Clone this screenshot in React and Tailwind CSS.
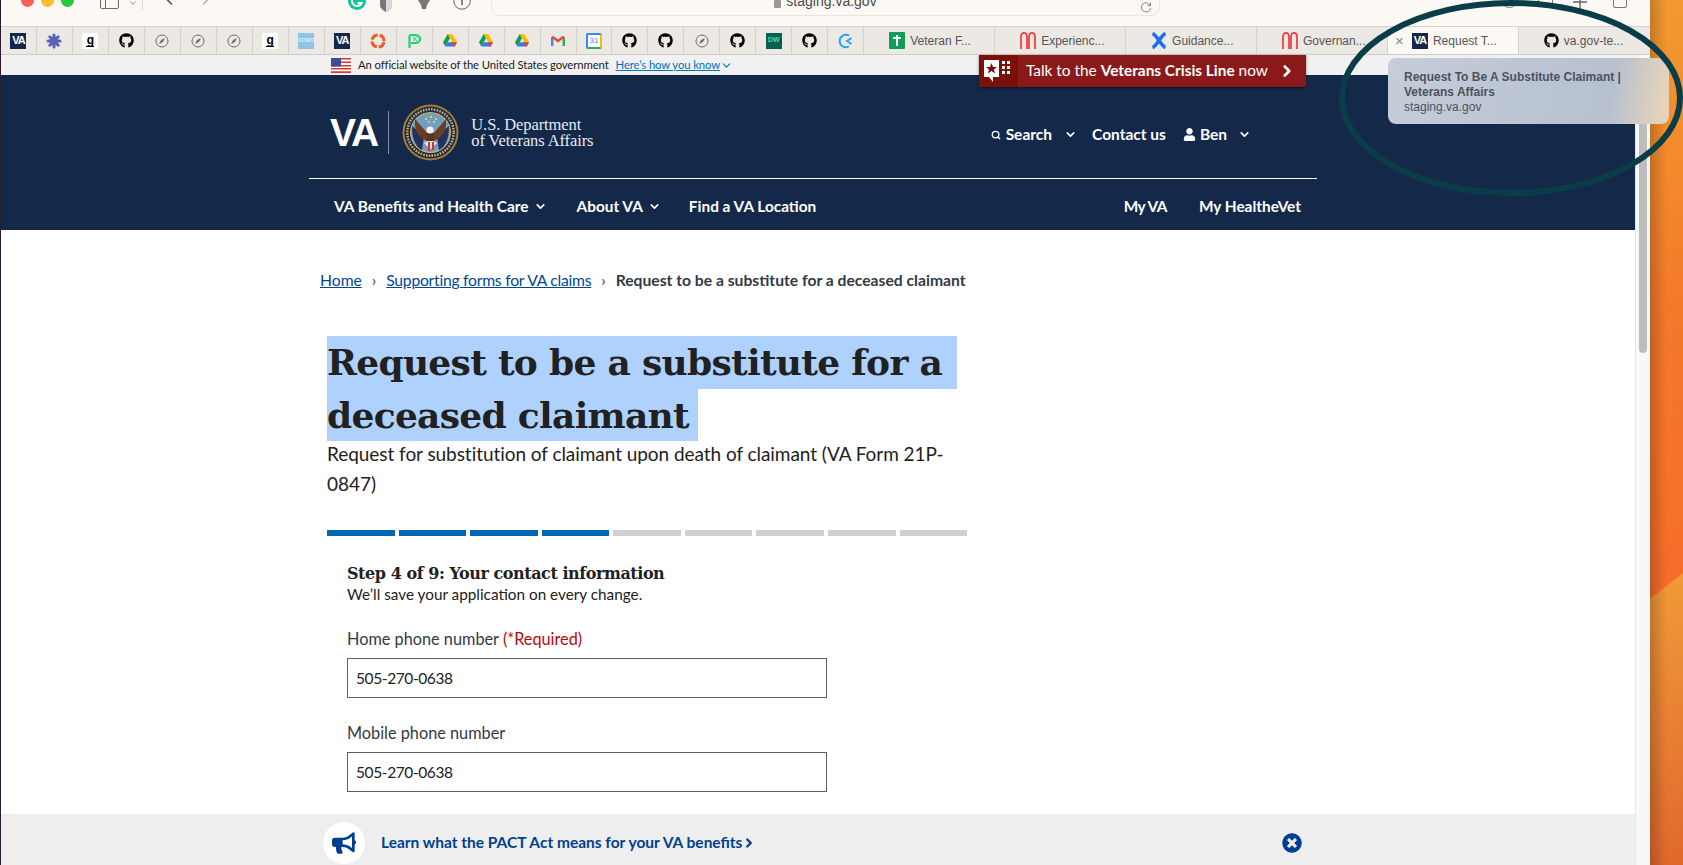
import React from "react";
import { ChevronDown, ChevronRight, Search } from "lucide-react";
import { FaBullhorn, FaGithub, FaTimesCircle, FaUser } from "react-icons/fa";

const sans = "font-['Lato','Noto_Sans',sans-serif]";
const slab = "font-['DejaVu_Serif',serif]";

const Compass = () => (
  <svg width="14" height="14" viewBox="0 0 14 14" fill="none">
    <circle cx="7" cy="7" r="6" stroke="#6e6e6e" strokeWidth="1" />
    <path d="M10 4L8 8L4 10L6 6Z" fill="#6e6e6e" />
  </svg>
);

const Github = () => <FaGithub className="text-[15px] text-black" />;

const Va = () => (
  <div className="flex h-4 w-4 items-center justify-center bg-[#14294a] font-['Liberation_Sans',sans-serif] text-[11px] font-bold tracking-[-1px] text-white">
    VA
  </div>
);

const Star = () => (
  <svg width="16" height="16" viewBox="0 0 16 16" stroke="#5a5fb8" strokeWidth="3" strokeLinecap="round">
    <path d="M8 2V14M2 8H14M3.8 3.8L12.2 12.2M12.2 3.8L3.8 12.2" />
  </svg>
);

const Goodreads = () => (
  <div className="flex h-4 w-4 flex-col items-center justify-center bg-white font-['Liberation_Sans',sans-serif] text-[12px] leading-[10px] font-bold text-black">
    g
    <div className="mt-[1px] h-[1px] w-2 bg-black" />
  </div>
);

const Domo = () => (
  <div className="flex h-4 w-4 items-center justify-center bg-[#90c3e6] font-['Liberation_Sans',sans-serif] text-[5px] text-white">
    DOMO
  </div>
);

const Ring = () => (
  <svg width="16" height="16" viewBox="0 0 16 16" fill="none" stroke="#ee5a2c" strokeWidth="3">
    <circle cx="8" cy="8" r="6" strokeDasharray="7.5 1.9" strokeDashoffset="-1" />
  </svg>
);

const Pk = () => (
  <svg width="14" height="16" viewBox="0 0 14 16" fill="none" stroke="#1fd07a" strokeWidth="2.2">
    <path d="M2.5 15V2" />
    <path d="M2.5 2H8.5C14.5 2 14.5 10 8.5 10H4" />
    <path d="M7 3.5V8M10 3.5L7.5 6L10 8" strokeWidth="1" />
  </svg>
);

const Drive = () => (
  <svg width="14" height="13" viewBox="0 0 14 13">
    <path d="M4.7 0H9.3L14 8.2H9.3Z" fill="#fbbc04" />
    <path d="M4.7 0L0 8.2L2.3 12.5L7 4.2Z" fill="#0f9d58" />
    <path d="M2.3 12.5H11.7L14 8.2H4.7Z" fill="#3b78e7" />
    <path d="M9.3 8.2H14L11.7 12.5L10 12.5Z" fill="#ea4335" />
  </svg>
);

const Gmail = () => (
  <svg width="14" height="11" viewBox="0 0 14 11" fill="none" strokeWidth="2.4">
    <path d="M1.2 11V2" stroke="#4285f4" />
    <path d="M12.8 11V2" stroke="#34a853" />
    <path d="M1.2 1.6L7 6L12.8 1.6" stroke="#ea4335" />
  </svg>
);

const Calendar = () => (
  <div className="flex h-4 w-4 items-center justify-center rounded-[2px] border-2 border-t-[#4285f4] border-r-[#fbbc04] border-b-[#34a853] border-l-[#4285f4] bg-white font-['Liberation_Sans',sans-serif] text-[8px] text-[#4285f4]">
    31
  </div>
);

const Dw = () => (
  <div className="flex h-4 w-4 items-center justify-center bg-[#07614f] font-['Liberation_Sans',sans-serif] text-[7px] font-bold text-[#45d8b0]">
    DW
  </div>
);

const Clock = () => (
  <svg width="15" height="16" viewBox="0 0 15 16" fill="none" stroke="#2ba5ec" strokeWidth="2">
    <path d="M11 2.5A6.3 6.3 0 1 0 11 13.5" />
    <path d="M13.5 5L9 8L13.5 11" />
  </svg>
);

const Arches = () => (
  <svg width="16" height="17" viewBox="0 0 16 17" fill="none" stroke="#f0383c" strokeWidth="1.7">
    <path d="M1 17V5C1 -0.5 7 -0.5 7 5V17" />
    <path d="M9 17V5C9 -0.5 15 -0.5 15 5V17" />
  </svg>
);

const Confluence = () => (
  <svg width="16" height="17" viewBox="0 0 16 17" fill="none" stroke="#1f6ff0" strokeWidth="3.6">
    <path d="M1.5 1.5C6 3 10 14 14.5 15.5" />
    <path d="M14.5 1.5C10 3 6 14 1.5 15.5" />
  </svg>
);

const Cross = () => (
  <div className="relative flex h-[17px] w-[16px] items-center justify-center rounded-[1px] bg-[#0f9d58]">
    <div className="h-[11px] w-[2px] bg-white" />
    <div className="absolute top-[5px] h-[2px] w-[8px] bg-white" />
  </div>
);

const iconTabs = [
  Va, Star, Goodreads, Github, Compass, Compass, Compass, Goodreads, Domo, Va, Ring, Pk,
  Drive, Drive, Drive, Gmail, Calendar, Github, Github, Compass, Github, Dw, Github, Clock,
];

const bigTabs = [
  { icon: Cross, label: "Veteran F..." },
  { icon: Arches, label: "Experienc..." },
  { icon: Confluence, label: "Guidance..." },
  { icon: Arches, label: "Governan..." },
];

const Seal = () => (
  <svg width="57" height="57" viewBox="0 0 57 57">
    <circle cx="28.5" cy="28.5" r="28" fill="#a67c2d" />
    <circle cx="28.5" cy="28.5" r="26" fill="#1b2a4a" />
    <circle cx="28.5" cy="28.5" r="23.2" fill="none" stroke="#c9b27a" strokeWidth="2.4" strokeDasharray="1.6 1.2" />
    <circle cx="28.5" cy="28.5" r="20.5" fill="#e3b64a" />
    <circle cx="28.5" cy="28.5" r="19.5" fill="#6f9fc4" />
    <path d="M10 22L22 32L20 46C14 43 10 36 10 22Z" fill="#22325f" />
    <path d="M47 22L35 32L37 46C43 43 47 36 47 22Z" fill="#22325f" />
    <path d="M26 30L13 15C12 24 15 33 25 37Z" fill="#6b3d1e" />
    <path d="M31 30L44 15C45 24 42 33 32 37Z" fill="#6b3d1e" />
    <path d="M25 29H32V38H25Z" fill="#5a3418" />
    <circle cx="28" cy="26" r="3.6" fill="#f4f1e8" />
    <path d="M20 37L28 47L37 37L33 41H24Z" fill="#c8343a" />
    <path d="M22 39L28 46L35 39L31 37H26Z" fill="#f1e9e0" />
    <path d="M26 38H28V47H26ZM30 38H32V46H30Z" fill="#c8343a" />
    <path d="M23 14H25V16H23ZM28 12H30V14H28ZM33 14H35V16H33ZM26 17H28V19H26ZM31 17H33V19H31Z" fill="#e8c860" />
  </svg>
);

const CrisisIcon = () => (
  <svg width="29" height="24" viewBox="0 0 29 24" fill="white">
    <path d="M0 1H15V18H9V23L5 18H0Z" />
    <path d="M7.5 4L9 8H13L10 10.5L11 14.5L7.5 12L4 14.5L5 10.5L2 8H6Z" fill="#7a1008" />
    <path d="M18 2H21V5H18ZM23 2H26V5H23ZM18 7H21V10H18ZM23 7H26V10H23ZM18 12H21V15H18ZM23 12H26V15H23Z" />
  </svg>
);

const Flag = () => (
  <svg width="20" height="15" viewBox="0 0 20 15">
    <rect width="20" height="15" fill="#fff" />
    <path d="M0 0H20V1.5H0ZM0 3.5H20V5H0ZM0 7H20V8.5H0ZM0 10H20V11.5H0ZM0 13.2H20V15H0Z" fill="#d33a36" />
    <rect width="10" height="8.5" fill="#3c4d92" />
  </svg>
);

const Chevron = ({ className }) => <ChevronDown strokeWidth={3} className={className} />;

const PhoneField = ({ label, required }) => (
  <div className="flex flex-col">
    <label className="text-[16.3px] leading-[24px] text-[#323a45]">
      {label} {required && <span className="text-[#b50909]">(*Required)</span>}
    </label>
    <input
      readOnly
      value="505-270-0638"
      className="mt-[7px] h-[40px] w-[480px] border border-[#5b616b] px-2 text-[15.5px] tracking-[-0.4px] text-[#212121] outline-none"
    />
  </div>
);

export default function App() {
  const steps = [1, 2, 3, 4, 5, 6, 7, 8, 9];
  return (
    <div className={`relative flex h-[865px] w-full overflow-hidden bg-white ${sans}`}>
      <div className="flex w-[1650px] flex-col border-l border-[#2c1a30]">
        {/* browser toolbar, cut off at the top of the shot */}
        <div className="flex h-[27px] items-start overflow-hidden border-b border-[#d6d2cd] bg-[#fcf8f4] font-['Liberation_Sans',sans-serif]">
          <div className="ml-[20px] -mt-[6px] flex gap-[7px]">
            <div className="h-[13px] w-[13px] rounded-full bg-[#ff5f57]" />
            <div className="h-[13px] w-[13px] rounded-full bg-[#febc2e]" />
            <div className="h-[13px] w-[13px] rounded-full bg-[#28c840]" />
          </div>
          <div className="ml-[26px] -mt-[6px] flex h-[15px] w-[19px] rounded-[2px] border border-[#6a6a6a]">
            <div className="w-[5px] border-r border-[#6a6a6a]" />
          </div>
          <ChevronDown size={10} className="ml-[9px] -mt-[2px] text-[#777]" />
          <div className="ml-[4px] h-[10px] w-px bg-[#ddd]" />
          <ChevronRight size={20} className="ml-[16px] -mt-[11px] rotate-180 text-[#555]" />
          <ChevronRight size={20} className="ml-[17px] -mt-[11px] text-[#b5b5b5]" />
          <svg width="18" height="18" viewBox="0 0 18 18" fill="none" className="ml-[132px] -mt-[8px]">
            <circle cx="9" cy="9" r="9" fill="#15c39a" />
            <path d="M13 6A5 5 0 1 0 13.6 11H9.5" stroke="white" strokeWidth="2" />
          </svg>
          <svg width="14" height="12" viewBox="0 0 14 12" className="ml-[13px]">
            <path d="M1 0H13V5C13 8 10 10.5 7 12C4 10.5 1 8 1 5Z" fill="#777" />
            <path d="M7 0H13V5C13 8 10 10.5 7 12Z" fill="#d8d8d8" />
          </svg>
          <svg width="16" height="9" viewBox="0 0 16 9" className="ml-[23px]">
            <path d="M2 0H14L11 5L10 9H6L5 5Z" fill="#777" />
          </svg>
          <svg width="18" height="10" viewBox="0 0 18 10" fill="none" stroke="#666" className="ml-[21px]">
            <circle cx="9" cy="1" r="8.2" />
            <path d="M9 0V5" strokeWidth="1.6" />
          </svg>
          <div className="relative ml-[20px] -mt-[14px] flex h-[30px] w-[669px] items-end justify-center rounded-[9px] border border-[#e9e5df] pb-[3px] text-[14px] text-[#4a4a4a]">
            <div className="mr-[5px] mb-[4px] h-[8px] w-[7px] rounded-[1px] bg-[#999]" />
            staging.va.gov
            <svg width="12" height="12" viewBox="0 0 12 12" fill="none" stroke="#888" className="absolute right-[7px] bottom-[2px]">
              <path d="M10 4A4.6 4.6 0 1 0 10.6 7" />
              <path d="M10.5 1.5V4.5H7.5" />
            </svg>
          </div>
          <div className="ml-[341px] -mt-[9px] h-[17px] w-[17px] rounded-full border border-[#777]" />
          <div className="ml-[20px] -mt-[9px] h-[16px] w-[15px] rounded-[2px] border border-[#777]" />
          <svg width="14" height="9" viewBox="0 0 14 9" stroke="#666" strokeWidth="1.4" className="ml-[20px]">
            <path d="M7 0V9M0 2H14" />
          </svg>
          <div className="ml-[26px] -mt-[9px] h-[17px] w-[14px] rounded-[2px] border border-[#777]" />
        </div>

        {/* tab strip */}
        <div className="flex h-[28px] border-b border-[#cfcbc6] bg-[#ece8e3] font-['Liberation_Sans',sans-serif] text-[12px] text-[#555]">
          {iconTabs.map((Icon, i) => (
            <div key={i} className="flex w-[36px] items-center justify-center border-r border-[#d6d2cd]">
              <Icon />
            </div>
          ))}
          {bigTabs.map((tab) => (
            <div key={tab.label} className="flex w-[131px] items-center gap-[5px] border-r border-[#d6d2cd] pl-[25px]">
              <tab.icon />
              <span className="whitespace-nowrap">{tab.label}</span>
            </div>
          ))}
          <div className="flex w-[131px] items-center gap-[5px] border-r border-[#d6d2cd] bg-[#fcf8f4] pl-[7px]">
            <span className="w-[12px] text-[15px] leading-none text-[#888]">×</span>
            <Va />
            <span className="whitespace-nowrap">Request T...</span>
          </div>
          <div className="flex w-[131px] items-center gap-[5px] pl-[25px]">
            <Github />
            <span className="whitespace-nowrap">va.gov-te...</span>
          </div>
        </div>

        <div className="flex min-h-0 flex-1">
          <div className="flex min-w-0 flex-1 flex-col">
            {/* official site banner */}
            <div className="flex h-[20px] items-center bg-[#f1f1f1] pl-[330px] text-[11.3px] tracking-[-0.1px] text-[#212121]">
              <Flag />
              <span className="ml-[7px]">An official website of the United States government</span>
              <span className="ml-[7px] text-[#0071bb] underline">Here’s how you know</span>
              <ChevronDown size={13} strokeWidth={2} className="text-[#0071bb]" />
            </div>

            {/* site header */}
            <header className="flex h-[155px] flex-col bg-[#14294a] pl-[308px] text-white">
              <div className="flex h-[104px] w-[1008px] items-center border-b border-white pt-[11px] pl-[21px]">
                <span className="font-['Liberation_Sans',sans-serif] text-[39px] leading-none font-bold tracking-[-2px]">VA</span>
                <div className="ml-[11px] h-[43px] w-px bg-[#8391a8]" />
                <div className="ml-[13px]"><Seal /></div>
                <div className="ml-[12px] mt-[1px] font-['Liberation_Serif',serif] text-[16.5px] leading-[16px] tracking-[-0.1px] text-[#e6e9ee]">
                  <div>U.S. Department</div>
                  <div>of Veterans Affairs</div>
                </div>
                <div className="ml-auto mr-[66px] mt-[5px] flex items-center text-[15.5px] font-bold">
                  <Search size={10} strokeWidth={3} />
                  <span className="ml-[5px]">Search</span>
                  <Chevron className="ml-[12px] h-[13px] w-[13px]" />
                  <span className="ml-[15px]">Contact us</span>
                  <FaUser size={13} className="ml-[17px]" />
                  <span className="ml-[4px]">Ben</span>
                  <Chevron className="ml-[11px] h-[13px] w-[13px]" />
                </div>
              </div>
              <nav className="flex w-[1008px] flex-1 items-center pl-[25px] pr-[16px] pt-[4px] text-[15.4px] font-bold">
                <span>VA Benefits and Health Care</span>
                <Chevron className="ml-[5px] h-[13px] w-[13px]" />
                <span className="ml-[30px]">About VA</span>
                <Chevron className="ml-[5px] h-[13px] w-[13px]" />
                <span className="ml-[28px]">Find a VA Location</span>
                <span className="ml-auto tracking-[-0.5px]">My VA</span>
                <span className="ml-[32px]">My HealtheVet</span>
              </nav>
            </header>

            {/* page body */}
            <main className="flex min-h-0 flex-1 flex-col pl-[326px] text-[#212121]">
              <div className="-ml-[7px] mt-[40px] flex items-center text-[15.7px] leading-[20px]">
                <span className="text-[#004795] underline">Home</span>
                <span className="mx-[10px] text-[#323a45]">›</span>
                <span className="tracking-[-0.25px] text-[#004795] underline">Supporting forms for VA claims</span>
                <span className="mx-[10px] text-[#323a45]">›</span>
                <span className="font-bold text-[#323a45]">Request to be a substitute for a deceased claimant</span>
              </div>

              <h1 className={`mt-[46px] text-[36px] leading-[52.5px] font-bold tracking-[-0.7px] text-[#212121] ${slab}`}>
                <span className="block w-[630px] whitespace-nowrap bg-[#afd1fd]">Request to be a substitute for a</span>
                <span className="block w-[371px] whitespace-nowrap bg-[#afd1fd]">deceased claimant</span>
              </h1>
              <p className="-mt-[2px] w-[640px] text-[19px] leading-[30px] tracking-[-0.05px] text-[#212121]">
                Request for substitution of claimant upon death of claimant (VA Form 21P-0847)
              </p>

              <div className="mt-[31px] flex w-[640px] gap-1">
                {steps.map((s) => (
                  <div key={s} className={s <= 4 ? "h-[6px] flex-1 bg-[#0068b3]" : "h-[6px] flex-1 bg-[#d0d0d4]"} />
                ))}
              </div>

              <div className="ml-[20px] mt-[26px] flex flex-col">
                <h2 className={`text-[16px] leading-[24px] font-bold tracking-[-0.45px] text-[#212121] ${slab}`}>
                  Step 4 of 9: Your contact information
                </h2>
                <p className="-mt-[2px] text-[15.3px] leading-[20px]">We’ll save your application on every change.</p>
                <div className="mt-[23px] flex flex-col gap-[23px]">
                  <PhoneField label="Home phone number" required />
                  <PhoneField label="Mobile phone number" />
                </div>
              </div>

              {/* promo strip */}
              <div className="-ml-[326px] mt-auto flex h-[51px] shrink-0 items-center bg-[#eeeeee] pt-[7px] pl-[322px] pr-[333px]">
                <div className="flex h-[42px] w-[42px] items-center justify-center rounded-full bg-white">
                  <FaBullhorn size={24} className="text-[#003f8f]" />
                </div>
                <span className="ml-[16px] text-[15.5px] font-bold text-[#003f8f]">
                  Learn what the PACT Act means for your VA benefits
                </span>
                <ChevronRight size={14} strokeWidth={4} className="text-[#003f8f]" />
                <FaTimesCircle size={20} className="ml-auto text-[#003f8f]" />
              </div>
            </main>
          </div>

          {/* page scrollbar */}
          <div className="w-[15px] border-l border-[#e6e6e6] bg-[#f8f8f8] px-[3px] pt-[3px]">
            <div className="h-[295px] rounded-full bg-[#bdbdbd]" />
          </div>
        </div>
      </div>

      {/* desktop wallpaper to the right of the window */}
      <svg className="h-[865px] flex-1" viewBox="0 0 33 865" preserveAspectRatio="none">
        <defs>
          <linearGradient id="wallTop" x1="0" y1="0" x2="0" y2="1">
            <stop offset="0" stopColor="#f29a2f" />
            <stop offset="0.35" stopColor="#f47a2a" />
            <stop offset="1" stopColor="#f65f28" />
          </linearGradient>
          <linearGradient id="wallBottom" x1="0" y1="0" x2="0" y2="1">
            <stop offset="0" stopColor="#f09a38" />
            <stop offset="1" stopColor="#e0682c" />
          </linearGradient>
          <linearGradient id="wallShade" x1="0" y1="0" x2="1" y2="0">
            <stop offset="0" stopColor="#000" stopOpacity="0.2" />
            <stop offset="0.5" stopColor="#000" stopOpacity="0" />
          </linearGradient>
        </defs>
        <rect width="33" height="865" fill="url(#wallTop)" />
        <path d="M0 599L33 573V865H0Z" fill="url(#wallBottom)" />
        <rect width="33" height="865" fill="url(#wallShade)" />
      </svg>

      {/* crisis line tab hanging over the header */}
      <div className="absolute left-[979px] top-[55px] flex h-[32px] w-[327px] items-center rounded-b-[2px] bg-[#8a1a1a] text-[15.4px] text-white shadow-[0_1px_3px_rgba(0,0,0,0.5)]">
        <div className="flex h-full w-[39px] items-center justify-center bg-[#7a1008]">
          <CrisisIcon />
        </div>
        <span className="ml-[8px]">Talk to the <b>Veterans Crisis Line</b> now</span>
        <ChevronRight size={18} strokeWidth={3.5} className="ml-auto mr-[10px]" />
      </div>

      {/* tab hover preview */}
      <div className="absolute left-[1388px] top-[58px] h-[66px] w-[281px] rounded-[8px] bg-[linear-gradient(100deg,#c6cdd9_0%,#b6c0cf_78%,#e6d3bb_97%)] pl-[16px] pt-[12px] font-['Liberation_Sans',sans-serif] text-[12px] leading-[15px] text-[#4c525e]">
        <div className="font-bold">Request To Be A Substitute Claimant |</div>
        <div className="font-bold">Veterans Affairs</div>
        <div>staging.va.gov</div>
      </div>

      {/* hand drawn annotation circle from the screenshot */}
      <svg className="pointer-events-none absolute left-[1335px] top-0" width="348" height="200" viewBox="0 0 348 200" fill="none">
        <ellipse cx="176" cy="98" rx="169" ry="95" stroke="#0b3d49" strokeWidth="6" />
      </svg>
    </div>
  );
}
